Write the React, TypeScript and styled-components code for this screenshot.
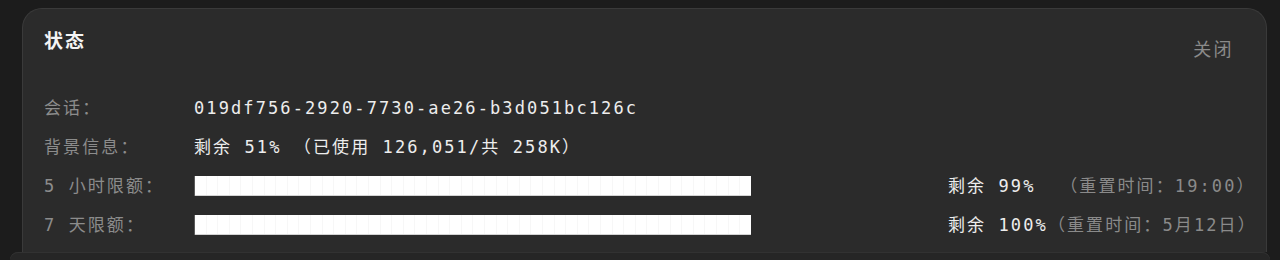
import React from "react";
import styled, { createGlobalStyle } from "styled-components";

const Global = createGlobalStyle`
  html, body { margin: 0; padding: 0; background: #1c1c1c; overflow: hidden; }
  body {
    font-family: "DejaVu Sans Mono", "Noto Sans CJK SC", monospace;
    font-size: 17px;
    letter-spacing: 2.1px;
  }
`;

const Page = styled.div`
  height: 260px;
  display: flex;
  flex-direction: column;
  overflow: hidden;
`;

const Card = styled.section`
  box-sizing: border-box;
  margin: 8px 0 0 22px;
  width: 1245px;
  height: 244px;
  flex: none;
  background: #2b2b2b;
  border: 1px solid #3a3a3a;
  border-bottom: none;
  border-radius: 20px 20px 0 0;
  padding: 19px 32px 0 21px;
`;

const Header = styled.div`
  display: flex;
  justify-content: space-between;
  align-items: flex-start;
  height: 32px;
`;

const Title = styled.h2`
  margin: 0;
  font-size: 19px;
  line-height: 24px;
  font-weight: 700;
  color: #f4f4f4;
  font-family: "Noto Sans CJK SC", sans-serif;
  letter-spacing: 2px;
`;

const CloseButton = styled.button`
  margin: 8px 0 0;
  padding: 0;
  border: none;
  background: none;
  font: inherit;
  font-family: "Noto Sans CJK SC", sans-serif;
  font-size: 18px;
  letter-spacing: 2.4px;
  line-height: 24px;
  color: #8a8a8a;
  cursor: pointer;
`;

const Grid = styled.div`
  margin-top: 28px;
  display: grid;
  grid-template-columns: 150px 557px 197px minmax(0, 1fr);
  grid-auto-rows: 39px;
  align-items: center;
`;

const Label = styled.div`
  color: #8c8c8c;
  white-space: pre;
  line-height: 24px;
`;

const Value = styled.div<{ $span?: number }>`
  color: #ededed;
  white-space: pre;
  line-height: 24px;
  grid-column: ${(p) => (p.$span ? `span ${p.$span}` : "auto")};
`;

const Bar = styled.div`
  box-sizing: border-box;
  height: 20px;
  background-color: #ffffff;
  background-image: repeating-linear-gradient(
    90deg,
    transparent 0,
    transparent 10.6px,
    #f7f7f7 10.6px,
    #f7f7f7 11.6px
  );
  border-left: 1px solid #5a5a5a;
  box-shadow: inset 0 -1px 0 #d4d4d4;
`;

const Spacer = styled.div``;

const Usage = styled.div`
  white-space: pre;
  line-height: 24px;
`;

const Percent = styled.span`
  color: #ededed;
`;

const Reset = styled.span`
  color: #8a8a8a;
`;

const Composer = styled.div`
  flex: 1;
  margin: 0 10px;
  background: #262626;
  box-shadow: inset 0 1px 0 #323232;
  border-radius: 20px 20px 0 0;
`;

export default function App() {
  return (
    <>
      <Global />
      <Page>
        <Card>
          <Header>
            <Title>状态</Title>
            <CloseButton>关闭</CloseButton>
          </Header>
          <Grid>
            <Label>会话：</Label>
            <Value $span={3}>019df756-2920-7730-ae26-b3d051bc126c</Value>

            <Label>背景信息：</Label>
            <Value $span={3}>剩余 51% （已使用 126,051/共 258K）</Value>

            <Label>5 小时限额：</Label>
            <Bar />
            <Spacer />
            <Usage>
              <Percent>剩余 99%  </Percent>
              <Reset>（重置时间：19:00）</Reset>
            </Usage>

            <Label>7 天限额：</Label>
            <Bar />
            <Spacer />
            <Usage>
              <Percent>剩余 100%</Percent>
              <Reset>（重置时间：5月12日）</Reset>
            </Usage>
          </Grid>
        </Card>
        <Composer />
      </Page>
    </>
  );
}
